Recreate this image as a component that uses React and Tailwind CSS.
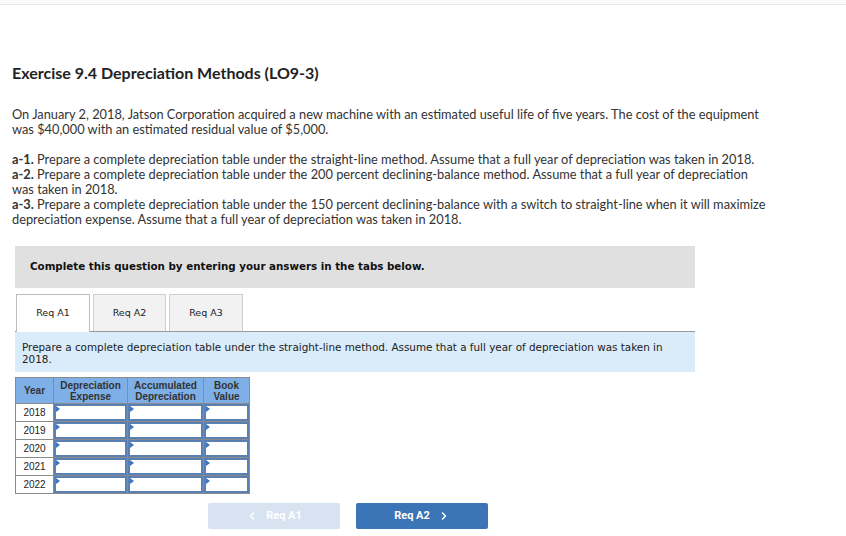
import { ChevronLeft, ChevronRight } from 'lucide-react'

const YEARS = ['2018', '2019', '2020', '2021', '2022']

function InputCell() {
  return (
    <td className="border border-[#8a8a8a] p-0 h-[18px]">
      <div className="relative h-[17px] border-2 border-[#5a7fb3] bg-white">
        <span className="absolute left-0 top-0 w-0 h-0 border-t-[3px] border-b-[3px] border-l-[4px] border-t-transparent border-b-transparent border-l-[#3f74c0]" />
      </div>
    </td>
  )
}

export default function App() {
  return (
    <div className="w-[846px] h-[536px] bg-white overflow-hidden text-[#333]" style={{ fontFamily: 'Lato, "Liberation Sans", sans-serif' }}>
      {/* top strip */}
      <div className="h-[5px] bg-[#fbfbfb] border-b border-[#e6e6e6]" />

      <div className="px-[12px]">
        <h1 className="mt-[59px] text-[16px] font-bold text-[#222] leading-[18px]">
          Exercise 9.4 Depreciation Methods (LO9-3)
        </h1>

        <p className="mt-[25px] text-[12.8px] leading-[15px]">
          On January 2, 2018, Jatson Corporation acquired a new machine with an estimated useful life of five years. The cost of the equipment
          <br />
          was $40,000 with an estimated residual value of $5,000.
        </p>

        <p className="mt-[15px] text-[12.8px] leading-[15px]">
          <b>a-1.</b> Prepare a complete depreciation table under the straight-line method. Assume that a full year of depreciation was taken in 2018.
          <br />
          <b>a-2.</b> Prepare a complete depreciation table under the 200 percent declining-balance method. Assume that a full year of depreciation
          <br />
          was taken in 2018.
          <br />
          <b>a-3.</b> Prepare a complete depreciation table under the 150 percent declining-balance with a switch to straight-line when it will maximize
          <br />
          depreciation expense. Assume that a full year of depreciation was taken in 2018.
        </p>
      </div>

      <div className="ml-[15px] w-[680px]" style={{ fontFamily: '"DejaVu Sans", Verdana, sans-serif' }}>
        <div className="mt-[19px] h-[42px] bg-[#e0e0e0] flex items-center px-[15px]">
          <span className="text-[10.3px] font-bold text-[#111]">Complete this question by entering your answers in the tabs below.</span>
        </div>

        <div className="mt-[6px] flex gap-[3px] pl-[1px] text-[9.5px] text-[#222]">
          <div className="w-[74px] h-[38px] flex items-center justify-center bg-white border border-[#bdbdbd] border-b-0 -mb-[1px] relative z-10">Req A1</div>
          <div className="w-[73px] h-[37px] flex items-center justify-center bg-[#f2f2f2] border border-[#cfcfcf] border-b-0">Req A2</div>
          <div className="w-[74px] h-[37px] flex items-center justify-center bg-[#f2f2f2] border border-[#cfcfcf] border-b-0">Req A3</div>
        </div>

        <div className="bg-[#daebf9] border-t border-[#9a9a9a] px-[7px] pt-[9px] pb-[7px] pr-[20px] text-[10.4px] leading-[12px] text-[#222]">
          Prepare a complete depreciation table under the straight-line method. Assume that a full year of depreciation was taken in 2018.
        </div>

        <table className="mt-[5px] border-collapse border border-[#777] text-[10px] text-[#222]" style={{ fontFamily: '"Liberation Sans", Arial, sans-serif' }}>
          <thead>
            <tr className="bg-[#7eafe6] h-[26px]">
              <th className="border border-[#8a8a8a] w-[38px] font-bold text-[#333] leading-[11px]">Year</th>
              <th className="border border-[#8a8a8a] w-[74px] font-bold text-[#333] leading-[11px]">Depreciation<br />Expense</th>
              <th className="border border-[#8a8a8a] w-[76px] font-bold text-[#333] leading-[11px]">Accumulated<br />Depreciation</th>
              <th className="border border-[#8a8a8a] w-[46px] font-bold text-[#333] leading-[11px]">Book<br />Value</th>
            </tr>
          </thead>
          <tbody>
            {YEARS.map(y => (
              <tr key={y} className="h-[18px]">
                <td className="border border-[#8a8a8a] text-center bg-white leading-[16px]">{y}</td>
                <InputCell />
                <InputCell />
                <InputCell />
              </tr>
            ))}
          </tbody>
        </table>

        <div className="mt-[9px] flex gap-[16px] ml-[193px]" style={{ fontFamily: 'Roboto, "Liberation Sans", sans-serif' }}>
          <button className="w-[132px] h-[26px] rounded-[2px] bg-[#d7e3f1] text-white text-[11px] font-bold flex items-center justify-center gap-[8px]">
            <ChevronLeft size={12} strokeWidth={3} />
            Req A1
          </button>
          <button className="w-[132px] h-[26px] rounded-[2px] bg-[#3b74b7] text-white text-[11px] font-bold flex items-center justify-center gap-[8px]">
            Req A2
            <ChevronRight size={12} strokeWidth={3} />
          </button>
        </div>
      </div>
    </div>
  )
}
